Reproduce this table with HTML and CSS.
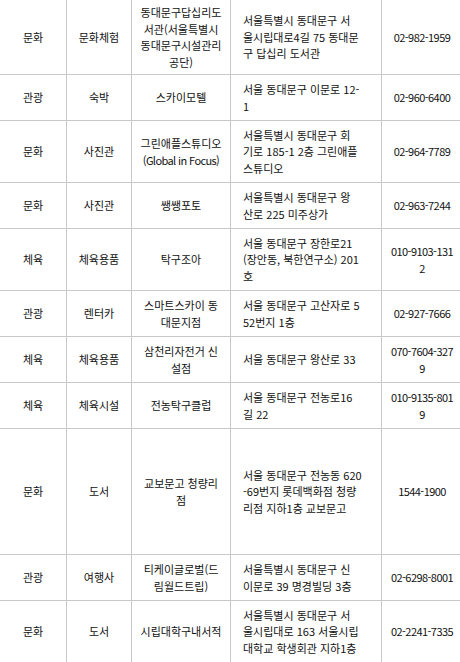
FILE: index.html
```html
<!DOCTYPE html>
<html lang="ko">
<head>
<meta charset="utf-8">
<link rel="stylesheet" href="styles.css">
</head>
<body>
<table class="list">
  <colgroup>
    <col class="c-cat"><col class="c-type"><col class="c-name"><col class="c-addr"><col class="c-tel">
  </colgroup>
  <tbody>
    <tr class="h75"><td>문화</td><td>문화체험</td><td>동대문구답십리도<br>서관(서울특별시<br>동대문구시설관리<br>공단)</td><td class="addr">서울특별시 동대문구 서<br>울시립대로4길 75 동대문<br>구 답십리 도서관</td><td class="tel">02-982-1959</td></tr>
    <tr class="h46"><td>관광</td><td>숙박</td><td>스카이모텔</td><td class="addr">서울 동대문구 이문로 12-<br>1</td><td class="tel">02-960-6400</td></tr>
    <tr class="h62"><td>문화</td><td>사진관</td><td>그린애플스튜디오<br><span class="latin">(Global in Focus)</span></td><td class="addr">서울특별시 동대문구 회<br>기로 185-1 2층 그린애플<br>스튜디오</td><td class="tel">02-964-7789</td></tr>
    <tr class="h46"><td>문화</td><td>사진관</td><td>쌩쌩포토</td><td class="addr">서울특별시 동대문구 왕<br>산로 225 미주상가</td><td class="tel">02-963-7244</td></tr>
    <tr class="h62"><td>체육</td><td>체육용품</td><td>탁구조아</td><td class="addr">서울 동대문구 장한로21<br>(장안동, 북한연구소) 201<br>호</td><td class="tel">010-9103-131<br>2</td></tr>
    <tr class="h46"><td>관광</td><td>렌터카</td><td>스마트스카이 동<br>대문지점</td><td class="addr">서울 동대문구 고산자로 5<br>52번지 1층</td><td class="tel">02-927-7666</td></tr>
    <tr class="h46"><td>체육</td><td>체육용품</td><td>삼천리자전거 신<br>설점</td><td class="addr">서울 동대문구 왕산로 33</td><td class="tel">070-7604-327<br>9</td></tr>
    <tr class="h46"><td>체육</td><td>체육시설</td><td>전농탁구클럽</td><td class="addr">서울 동대문구 전농로16<br>길 22</td><td class="tel">010-9135-801<br>9</td></tr>
    <tr class="h126"><td>문화</td><td>도서</td><td>교보문고 청량리<br>점</td><td class="addr">서울 동대문구 전농동 620<br>-69번지 롯데백화점 청량<br>리점 지하1층 교보문고</td><td class="tel">1544-1900</td></tr>
    <tr class="h46"><td>관광</td><td>여행사</td><td>티케이글로벌(드<br>림월드트립)</td><td class="addr">서울특별시 동대문구 신<br>이문로 39 명경빌딩 3층</td><td class="tel">02-6298-8001</td></tr>
    <tr class="h62"><td>문화</td><td>도서</td><td>시립대학구내서적</td><td class="addr">서울특별시 동대문구 서<br>울시립대로 163 서울시립<br>대학교 학생회관 지하1층</td><td class="tel">02-2241-7335</td></tr>
  </tbody>
</table>
</body>
</html>
```
FILE: styles.css
```css
html, body {
  margin: 0;
  padding: 0;
  background: #fff;
  overflow: hidden;
}
body {
  width: 460px;
  height: 662px;
  font-family: "Noto Sans CJK KR", "Noto Sans", sans-serif;
  font-size: 11px;
  line-height: 16.5px;
  color: #111;
}
.list {
  width: 463px;
  table-layout: fixed;
  border-collapse: separate;
  border-spacing: 0;
}
.c-cat { width: 67px; }
.c-type { width: 65px; }
.c-name { width: 99px; }
.c-addr { width: 151px; }
.c-tel { width: 81px; }
.list td {
  box-sizing: border-box;
  padding: 0 2px;
  border-right: 1px solid #c8c8c8;
  border-bottom: 1px solid #c8c8c8;
  text-align: center;
  vertical-align: middle;
  white-space: nowrap;
  overflow: hidden;
}
.list td.addr {
  text-align: left;
  padding-left: 12px;
}
.list td.tel {
  letter-spacing: -0.55px;
}
.latin {
  letter-spacing: -0.6px;
}
.h46 td { height: 46px; }
.h62 td { height: 62px; }
.h75 td { height: 75px; }
.h126 td { height: 126px; }
```
